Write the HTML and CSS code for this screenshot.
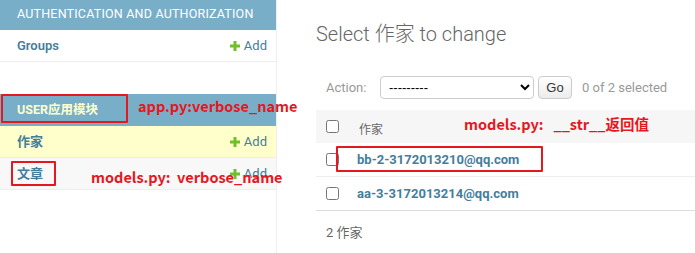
FILE: index.html
```html
<!DOCTYPE html>
<html lang="zh-CN">
<head>
    <meta charset="UTF-8">
    <title>Select 作家 to change</title>
    <link rel="stylesheet" href="styles.css">
</head>
<body>
    <div class="page">
        <nav class="sidebar">
            <div class="module">
                <div class="caption">Authentication and Authorization</div>
                <div class="model-row">
                    <a class="model-name" href="#">Groups</a>
                    <a class="add-link" href="#"><svg class="plus" viewBox="0 0 10 10"><rect x="3.5" y="0" width="3" height="10"/><rect x="0" y="3.5" width="10" height="3"/></svg>Add</a>
                </div>
            </div>
            <div class="module">
                <div class="caption current">USER应用模块</div>
                <div class="model-row selected">
                    <a class="model-name" href="#">作家</a>
                    <a class="add-link" href="#"><svg class="plus" viewBox="0 0 10 10"><rect x="3.5" y="0" width="3" height="10"/><rect x="0" y="3.5" width="10" height="3"/></svg>Add</a>
                </div>
                <div class="model-row grey">
                    <a class="model-name" href="#">文章</a>
                    <a class="add-link" href="#"><svg class="plus" viewBox="0 0 10 10"><rect x="3.5" y="0" width="3" height="10"/><rect x="0" y="3.5" width="10" height="3"/></svg>Add</a>
                </div>
            </div>
        </nav>

        <main class="content">
            <h1>Select 作家 to change</h1>

            <div class="actions">
                <label>Action:</label>
                <select class="action-select">
                    <option>---------</option>
                </select>
                <button class="go-btn">Go</button>
                <span class="counter">0 of 2 selected</span>
            </div>

            <div class="results">
                <div class="result-row head">
                    <input type="checkbox">
                    <span class="col-title">作家</span>
                </div>
                <div class="result-row">
                    <input type="checkbox">
                    <a class="obj-link" href="#">bb-2-3172013210@qq.com</a>
                </div>
                <div class="result-row">
                    <input type="checkbox">
                    <a class="obj-link" href="#">aa-3-3172013214@qq.com</a>
                </div>
            </div>

            <p class="paginator">2 作家</p>
        </main>

        <!-- anotações em vermelho por cima da tela -->
        <div class="mark box-app"></div>
        <div class="note note-app">app.py:verbose_name</div>
        <div class="mark box-model"></div>
        <div class="note note-model">models.py:&nbsp; verbose_name</div>
        <div class="mark box-str"></div>
        <div class="note note-str">models.py:&nbsp;&nbsp; __str__返回值</div>
    </div>
</body>
</html>
```

FILE: styles.css
```css
body {
    margin: 0;
    font-family: Roboto, "Noto Sans CJK SC", sans-serif;
    font-size: 13px;
    color: #333;
    background: #fff;
}

a { text-decoration: none; }

.page {
    position: relative;
    display: flex;
    width: 695px;
    height: 253px;
    overflow: hidden;
}

/* --- barra lateral --- */
.sidebar {
    width: 276px;
    flex-shrink: 0;
    margin-top: -2px;
    border-right: 1px solid #eee;
}

.module { margin-bottom: 32px; }

.caption {
    background: #79aec8;
    color: #fff;
    padding: 9px 17px;
    line-height: 14px;
    font-size: 12.5px;
    text-transform: uppercase;
    letter-spacing: 0.2px;
}

.caption.current {
    color: #ffffcc;
    font-weight: bold;
    letter-spacing: 0;
}

.model-row {
    display: flex;
    justify-content: space-between;
    align-items: center;
    padding: 9px 9px 8px 17px;
    line-height: 14px;
    border-bottom: 1px solid #eee;
}

.model-row.selected { background: #ffffcc; }
.model-row.grey { background: #f8f8f8; }

.model-name {
    color: #447e9b;
    font-weight: 600;
}

.add-link {
    display: flex;
    align-items: center;
    gap: 4px;
    color: #447e9b;
}

.plus { width: 10px; height: 10px; fill: #70bf2b; }

/* --- conteúdo --- */
.content {
    flex: 1;
    padding: 22px 0 0 39px;
    min-width: 0;
}

h1 {
    margin: 0;
    font-size: 20px;
    font-weight: 300;
    line-height: 24px;
    color: #666;
}

.actions {
    display: flex;
    align-items: center;
    margin-top: 30px;
    padding-left: 10px;
    height: 23px;
    color: #999;
}

.actions label { width: 54px; }

.action-select {
    width: 154px;
    height: 23px;
    margin: 0;
    border: 1px solid #ccc;
    border-radius: 4px;
    background: #fff;
    font-family: "Liberation Sans", sans-serif;
    font-size: 13px;
    color: #000;
    padding: 0 4px;
}

.go-btn {
    margin: 0 0 0 4px;
    width: 34px;
    height: 23px;
    border: 1px solid #ccc;
    border-radius: 4px;
    background: linear-gradient(#fff, #ececec);
    font-family: "Liberation Sans", sans-serif;
    font-size: 13px;
    color: #333;
    padding: 0;
}

.counter { margin-left: 10px; }

.results { margin-top: 11px; }

.result-row {
    display: flex;
    align-items: center;
    gap: 18px;
    height: 33px;
    padding-left: 10px;
    border-bottom: 1px solid #eee;
}

.result-row.head {
    background: #f6f6f6;
    height: 33px;
    border-bottom: none;
}

.result-row input {
    margin: 0;
    width: 13px;
    height: 13px;
}

.col-title {
    font-size: 12px;
    color: #666;
    padding: 4px 0 0 2px;
}

.obj-link {
    color: #447e9b;
    font-weight: bold;
}

.result-row:last-child { border-bottom-color: #ddd; }

.paginator {
    margin: 0;
    padding: 14px 0 0 10px;
    color: #666;
    line-height: 16px;
}

/* --- anotações --- */
.mark {
    position: absolute;
    border: 2px solid #e5171f;
    border-radius: 1px;
    box-sizing: border-box;
}

.box-app { left: 1px; top: 94px; width: 127px; height: 29px; }
.box-model { left: 11px; top: 161px; width: 45px; height: 25px; }
.box-str { left: 336px; top: 146px; width: 207px; height: 26px; }

.note {
    position: absolute;
    color: #e5171f;
    font-family: "Noto Sans CJK SC", "Noto Sans", sans-serif;
    font-weight: bold;
    font-size: 14.5px;
    line-height: 16px;
    white-space: nowrap;
}

.note-app { left: 138px; top: 98px; }
.note-model { left: 91px; top: 169px; }
.note-str { left: 464px; top: 116px; }
```
